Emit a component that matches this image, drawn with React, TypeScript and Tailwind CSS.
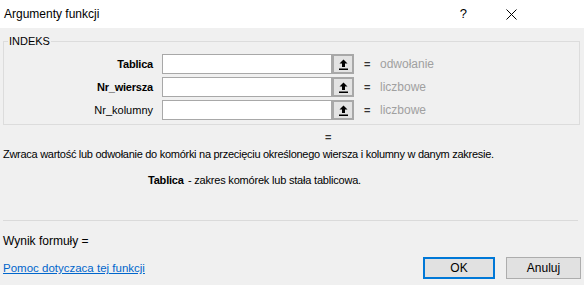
import React from "react";

const font = { fontFamily: '"Liberation Sans", Arial, sans-serif' };

function RefIcon() {
  return (
    <svg width="9" height="11" viewBox="0 0 9 11" className="block">
      <path d="M4.5 0.5 L8.5 4.5 L6 4.5 L6 8 L3 8 L3 4.5 L0.5 4.5 Z" fill="#000" />
      <rect x="0" y="9.5" width="9" height="1.5" fill="#000" />
    </svg>
  );
}

function ArgRow({ label, bold, value }: { label: string; bold?: boolean; value: string }) {
  return (
    <div className="flex h-[20px] items-center">
      <div className={`w-[149px] text-right text-[11px] text-black ${bold ? "font-bold tracking-[-0.2px]" : ""}`}>{label}</div>
      <div className="ml-[9px] h-[20px] w-[170px] border border-[#a8a8a8] bg-white" />
      <div className="flex h-[20px] w-[22px] items-center justify-center border-2 border-[#a8a8a8] bg-[#e3e3e3]">
        <RefIcon />
      </div>
      <div className="ml-[10px] w-[16px] text-[11px] font-bold text-[#333]">=</div>
      <div className="text-[12px] text-[#a0a0a0]">{value}</div>
    </div>
  );
}

export default function App() {
  return (
    <div className="flex h-[285px] w-[584px] flex-col overflow-hidden bg-[#f0f0f0]" style={font}>
      <div className="flex h-[28px] items-center bg-white pl-[4px]">
        <span className="text-[12px] text-black">Argumenty funkcji</span>
        <span className="ml-auto text-[13px] text-black">?</span>
        <svg width="11" height="11" viewBox="0 0 11 11" className="ml-[39px] mr-[67px]">
          <path d="M0.5 0.5 L10.5 10.5 M10.5 0.5 L0.5 10.5" stroke="#000" strokeWidth="1" />
        </svg>
      </div>

      <fieldset className="mx-[3px] mr-[4px] mt-[6px] border border-[#dcdcdc] pb-[4px]">
        <legend className="ml-[4px] px-[1px] text-[11px] leading-[14px] text-black">INDEKS</legend>
        <div className="mt-[6px] flex flex-col gap-[3px]">
          <ArgRow label="Tablica" bold value="odwołanie" />
          <ArgRow label="Nr_wiersza" bold value="liczbowe" />
          <ArgRow label="Nr_kolumny" value="liczbowe" />
        </div>
      </fieldset>

      <div className="px-[3px] text-[11px] leading-[14px] text-black">
        <div className="mt-[5px] pl-[322px] font-bold text-[#333]">=</div>
        <div className="mt-[3px] tracking-[-0.28px]">
          Zwraca wartość lub odwołanie do komórki na przecięciu określonego wiersza i kolumny w danym zakresie.
        </div>
        <div className="mt-[12px] flex pl-[145px] tracking-[-0.2px]">
          <span className="w-[40px] font-bold">Tablica</span>
          <span>- zakres komórek lub stała tablicowa.</span>
        </div>
        <div className="mt-[33px] h-px w-[575px] bg-[#dadada]" />
        <div className="mt-[13px] text-[12px]">Wynik formuły =</div>
        <div className="mt-[9px] flex h-[22px] items-center">
          <a href="#" className="text-[11.5px] text-[#0066cc] underline">
            Pomoc dotyczaca tej funkcji
          </a>
          <button className="ml-auto h-[22px] w-[72px] border-2 border-[#0078d7] bg-[#e1e1e1] text-[12px] text-black">
            OK
          </button>
          <button className="ml-[11px] h-[22px] w-[75px] border border-[#adadad] bg-[#e1e1e1] text-[12px] text-black">
            Anuluj
          </button>
        </div>
      </div>
    </div>
  );
}
